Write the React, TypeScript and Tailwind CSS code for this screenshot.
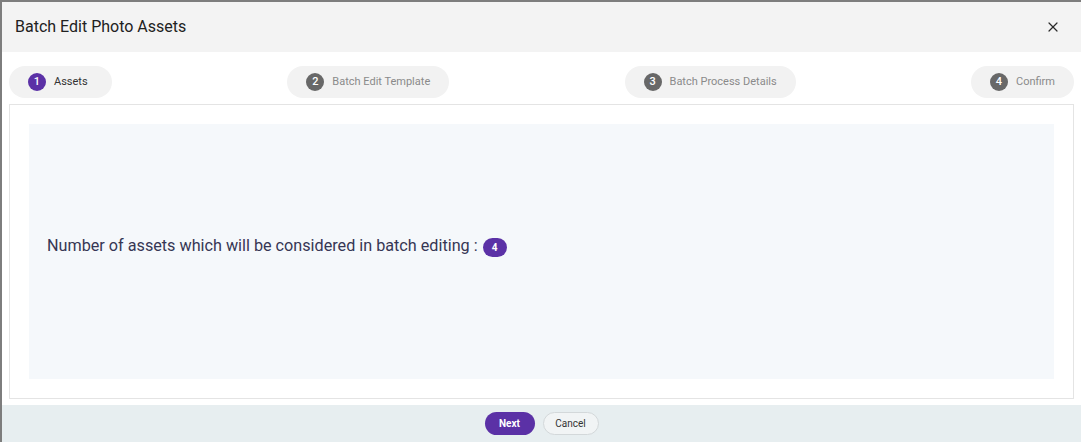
import { X } from 'lucide-react';

const steps = [
  { n: 1, label: 'Assets', active: true },
  { n: 2, label: 'Batch Edit Template', active: false },
  { n: 3, label: 'Batch Process Details', active: false },
  { n: 4, label: 'Confirm', active: false },
];

export default function App() {
  return (
    <div
      className="h-[442px] w-[1081px] overflow-hidden bg-[#7d7d7d] pl-[2px] pt-[2px]"
      style={{ fontFamily: 'Roboto, "Noto Sans", sans-serif' }}
    >
      <div className="flex h-full flex-col bg-white">
        {/* header */}
        <div className="flex h-[50px] shrink-0 items-center justify-between bg-[#f3f3f3] pl-[13px] pr-[20px]">
          <h1 className="text-[16px] font-normal text-[#212121]">Batch Edit Photo Assets</h1>
          <X size={16} strokeWidth={1.8} className="text-[#2a2a2a]" />
        </div>

        {/* stepper */}
        <div className="mt-[14px] flex justify-between px-[7px]">
          {steps.map((s) => (
            <div
              key={s.n}
              className="flex h-[32px] min-w-[103px] items-center gap-[8px] rounded-full bg-[#f2f2f2] px-[19px]"
            >
              <span
                className={`flex h-[18px] w-[18px] items-center justify-center rounded-full text-[11px] font-medium text-white ${
                  s.active ? 'bg-[#5b31a6]' : 'bg-[#686868]'
                }`}
              >
                {s.n}
              </span>
              <span className={`text-[11px] ${s.active ? 'text-[#333333]' : 'text-[#8a8a8a]'}`}>
                {s.label}
              </span>
            </div>
          ))}
        </div>

        {/* body */}
        <div className="mx-[7px] mt-[6px] h-[295px] shrink-0 border border-[#e4e4e4] p-[19px]">
          <div className="flex h-full items-center bg-[#f5f8fb] px-[18px] pb-[10px]">
            <span className="text-[16.2px] text-[#363654]">
              Number of assets which will be considered in batch editing :
            </span>
            <span className="ml-[5px] mt-[2px] flex h-[19px] w-[24px] items-center justify-center rounded-full bg-[#5b31a6] text-[10px] font-bold text-white">
              4
            </span>
          </div>
        </div>

        {/* footer */}
        <div className="mt-[6px] flex flex-1 items-center justify-center gap-[8px] bg-[#e7eef0]">
          <button className="h-[23px] w-[50px] rounded-full bg-[#5b31a6] text-[10px] font-bold text-white">
            Next
          </button>
          <button className="h-[23px] w-[56px] rounded-full border border-[#d3d8da] bg-[#f1f4f5] text-[10px] text-[#333333]">
            Cancel
          </button>
        </div>
      </div>
    </div>
  );
}
